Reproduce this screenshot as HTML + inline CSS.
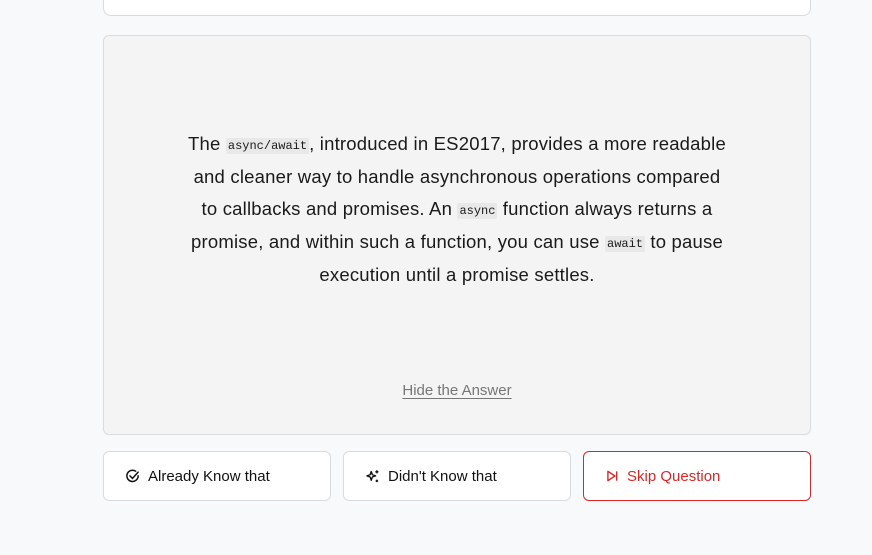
<!DOCTYPE html>
<html><head><style>
body{margin:0;width:872px;height:555px;background:#f8f9fb;font-family:"Liberation Sans",sans-serif;position:relative;overflow:hidden}
.top{position:absolute;left:103px;top:-10px;width:706px;height:24px;background:#fff;border:1px solid #d9dbe0;border-radius:8px}
.card{position:absolute;left:103px;top:35px;width:706px;height:398px;background:#f4f4f5;border:1px solid #d9dbe0;border-radius:6px}
.txt{position:absolute;left:0;right:0;top:92px;text-align:center;font-size:18.5px;letter-spacing:0.2px;line-height:32.7px;color:#1a1a1a;white-space:nowrap}
.txt div{height:32.7px}
code{font-family:"Liberation Mono",monospace;font-size:12px;letter-spacing:0;background:#e8e8e9;padding:1px 2px;border-radius:2px;line-height:1;vertical-align:1px}
.hide{position:absolute;left:0;right:0;top:346px;text-align:center;font-size:15px;color:#777;text-decoration:underline;text-underline-offset:3px}
.btn{position:absolute;top:451px;height:50px;background:#fff;border:1px solid #d9dbe0;border-radius:6px;font-size:15px;color:#111;display:flex;align-items:center;box-sizing:border-box;padding-left:21px}
.btn svg{margin-right:8px}
.red{border-color:#dc2626;color:#dc2626}
</style></head><body>
<div class="top"></div>
<div class="card">
<div class="txt"><div>The <code>async/await</code>, introduced in ES2017, provides a more readable</div><div>and cleaner way to handle asynchronous operations compared</div><div>to callbacks and promises. An <code>async</code> function always returns a</div><div>promise, and within such a function, you can use <code>await</code> to pause</div><div>execution until a promise settles.</div></div>
<div class="hide">Hide the Answer</div>
</div>
<div class="btn" style="left:103px;width:228px"><svg width="15" height="15" viewBox="0 0 24 24" fill="none" stroke="#111" stroke-width="2.4" stroke-linecap="round"><path d="M21 11a9 9 0 1 1-4-7.5"/><path d="M8 11l4 4 9-10"/></svg>Already Know that</div>
<div class="btn" style="left:343px;width:228px"><svg width="15" height="15" viewBox="0 0 24 24" fill="none" stroke="#111" stroke-width="2.2" stroke-linejoin="round"><path d="M10 4l1.8 5.2L17 11l-5.2 1.8L10 18l-1.8-5.2L3 11l5.2-1.8z"/><path d="M19 2v5M16.5 4.5h5M19 17v4M17 19h4"/></svg>Didn't Know that</div>
<div class="btn red" style="left:583px;width:228px"><svg width="14" height="14" viewBox="0 0 24 24" fill="none" stroke="#dc2626" stroke-width="2.4" stroke-linejoin="round"><path d="M5 4l12 8-12 8z"/><path d="M20 4v16"/></svg>Skip Question</div>
</body></html>
